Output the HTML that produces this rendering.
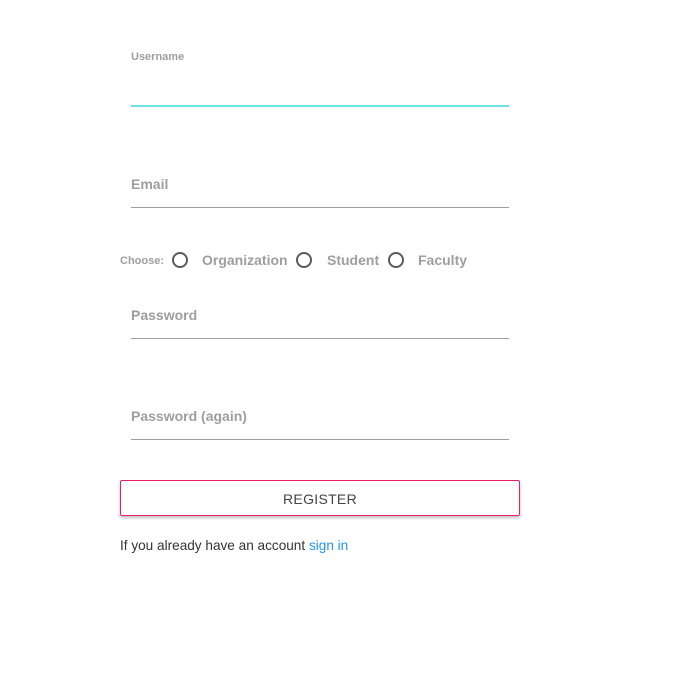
<!DOCTYPE html>
<html><head><style>
body{margin:0;width:684px;height:689px;background:#fff;font-family:"Liberation Sans",sans-serif;position:relative;overflow:hidden}
.a{position:absolute}
.lbl{color:#9e9e9e;font-weight:bold;font-size:14px}
.line{position:absolute;left:131px;width:378px;height:1px;background:#9e9e9e}
.r{position:absolute;width:12px;height:12px;border:2px solid #5a5a5a;border-radius:50%;top:252px}
</style></head><body>
<div class="a lbl" style="left:131px;top:51px;font-size:11px">Username</div>
<div class="line" style="top:105px;height:2px;background:#6ee0ea"></div>
<div class="a lbl" style="left:131px;top:176px">Email</div>
<div class="line" style="top:207px"></div>
<div class="a lbl" style="left:120px;top:255px;font-size:11px">Choose:</div>
<div class="r" style="left:172px"></div>
<div class="a lbl" style="left:202px;top:252px">Organization</div>
<div class="r" style="left:296px"></div>
<div class="a lbl" style="left:327px;top:252px">Student</div>
<div class="r" style="left:388px"></div>
<div class="a lbl" style="left:418px;top:252px">Faculty</div>
<div class="a lbl" style="left:131px;top:307px">Password</div>
<div class="line" style="top:338px"></div>
<div class="a lbl" style="left:131px;top:408px">Password (again)</div>
<div class="line" style="top:439px"></div>
<div class="a" style="left:120px;top:480px;width:398px;height:34px;border:1px solid #e91e63;border-radius:2px;box-shadow:0 2px 3px rgba(0,0,0,.25);text-align:center;line-height:36px;font-size:14px;color:#444;letter-spacing:.3px">REGISTER</div>
<div class="a" style="left:120px;top:538px;font-size:13.6px;color:#333">If you already have an account <span style="color:#2196f3">sign in</span></div>
</body></html>
